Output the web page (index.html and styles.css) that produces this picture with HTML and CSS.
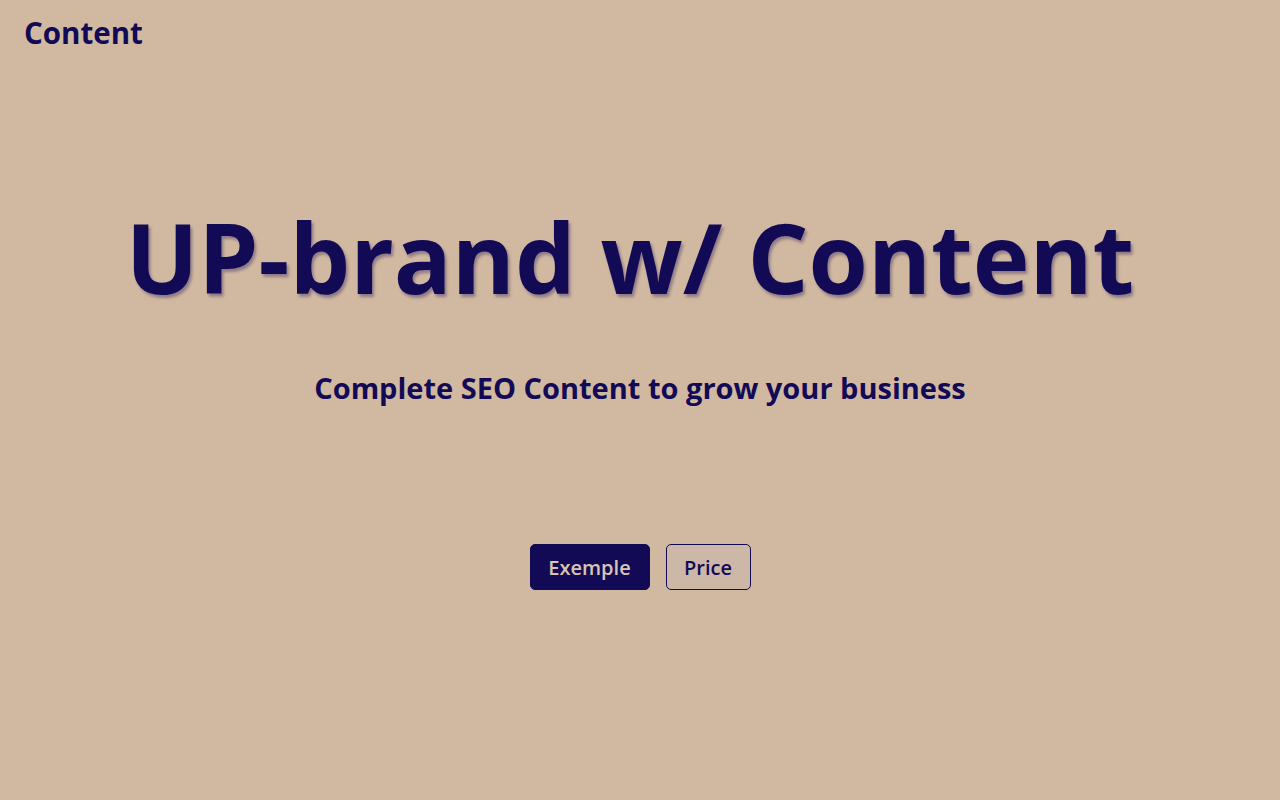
FILE: index.html
```html
<!DOCTYPE html>
<html lang="en">
<head>
<meta charset="utf-8">
<title>Content</title>
<link rel="stylesheet" href="styles.css">
</head>
<body>
<header class="topbar">
  <div class="logo">Content</div>
</header>
<main class="hero">
  <h1 class="title">UP-brand w/ Content</h1>
  <p class="subtitle">Complete SEO Content to grow your business</p>
  <div class="actions">
    <a class="btn btn-primary" href="#">Exemple</a>
    <a class="btn btn-outline" href="#">Price</a>
  </div>
</main>
</body>
</html>
```
FILE: styles.css
```css
* { box-sizing: border-box; }
html, body { margin: 0; padding: 0; }
body {
  background: #d1b9a1;
  color: #130a55;
  font-family: "Open Sans", "Lato", sans-serif;
  width: 1280px;
  height: 800px;
  overflow: hidden;
}
.topbar {
  padding: 13px 24px 0;
  height: 60px;
}
.logo {
  font-size: 29.5px;
  font-weight: 700;
  line-height: 40px;
}
.hero {
  display: flex;
  flex-direction: column;
  align-items: center;
}
.title {
  margin: 137px 0 0;
  padding-right: 20px;
  font-size: 96px;
  font-weight: 700;
  line-height: 120px;
  text-shadow: 2px 3px 3px rgba(19, 10, 85, 0.35);
}
.subtitle {
  margin: 51px 0 0;
  font-size: 29px;
  font-weight: 700;
  line-height: 40px;
}
.actions {
  display: flex;
  gap: 16px;
  margin-top: 136px;
}
.btn {
  display: flex;
  align-items: center;
  justify-content: center;
  height: 46px;
  padding: 0 16px;
  border-radius: 5px;
  font-size: 20px;
  font-weight: 600;
  text-decoration: none;
  border: 1px solid #130a55;
}
.btn-primary {
  background: #130a55;
  color: #d8c4b0;
  width: 120px;
}
.btn-outline {
  background: #cdb8a8;
  color: #130a55;
  width: 85px;
}
```
